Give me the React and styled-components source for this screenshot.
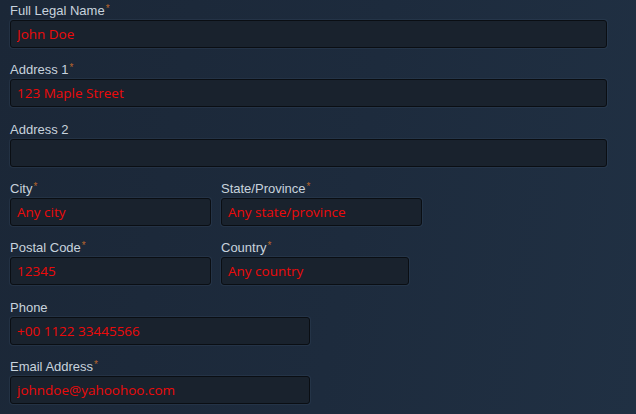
import React from "react";
import styled, { createGlobalStyle } from "styled-components";

const GlobalStyle = createGlobalStyle`
  html, body {
    margin: 0;
    padding: 0;
    background: #1c2a3b;
  }
  body {
    width: 636px;
    height: 414px;
    overflow: hidden;
    background: linear-gradient(100deg, #1b2737 0%, #1d2b3d 55%, #203043 100%);
  }
`;

const Form = styled.form`
  display: flex;
  flex-direction: column;
  width: 598px;
  padding: 0 0 0 10px;
`;

const Row = styled.div`
  display: flex;
  gap: 10px;
`;

const Field = styled.div`
  display: flex;
  flex-direction: column;
  gap: 1px;
  margin-bottom: 11.34px;
  width: ${(p) => p.$width || "100%"};
`;

const Label = styled.label`
  display: block;
  height: 19px;
  font-family: "Liberation Sans", Arial, sans-serif;
  font-size: 13px;
  line-height: 17px;
  padding-top: 2px;
  box-sizing: border-box;
  color: #c8d3dd;
`;

const Required = styled.span`
  position: relative;
  top: -3px;
  line-height: 0;
  color: #b9652c;
  font-size: 10px;
  margin-left: 1px;
`;

const Input = styled.input`
  box-sizing: border-box;
  width: ${(p) => p.$width || "100%"};
  height: 28px;
  margin: 0;
  padding: 0 6px;
  border: 1px solid #0a0e13;
  border-radius: 3px;
  background: #19222d;
  box-shadow: 0 0 0 1px rgba(60, 80, 105, 0.25);
  color: #ec0a0a;
  font-family: "Open Sans", "Noto Sans", sans-serif;
  font-size: 13.5px;
  outline: none;
`;

function FormField({ label, required, value, width, inputWidth }) {
  return (
    <Field $width={width}>
      <Label>
        {label}
        {required && <Required>*</Required>}
      </Label>
      <Input defaultValue={value} $width={inputWidth} />
    </Field>
  );
}

export default function App() {
  return (
    <>
      <GlobalStyle />
      <Form onSubmit={(e) => e.preventDefault()}>
        <FormField label="Full Legal Name" required value="John Doe" inputWidth="597px" />
        <FormField label="Address 1" required value="123 Maple Street" inputWidth="597px" />
        <FormField label="Address 2" value="" inputWidth="597px" />
        <Row>
          <FormField label="City" required value="Any city" width="201px" />
          <FormField label="State/Province" required value="Any state/province" width="201px" />
        </Row>
        <Row>
          <FormField label="Postal Code" required value="12345" width="201px" />
          <FormField label="Country" required value="Any country" width="201px" inputWidth="188px" />
        </Row>
        <FormField label="Phone" value="+00 1122 33445566" width="300px" />
        <FormField label="Email Address" required value="johndoe@yahoohoo.com" width="300px" />
      </Form>
    </>
  );
}
